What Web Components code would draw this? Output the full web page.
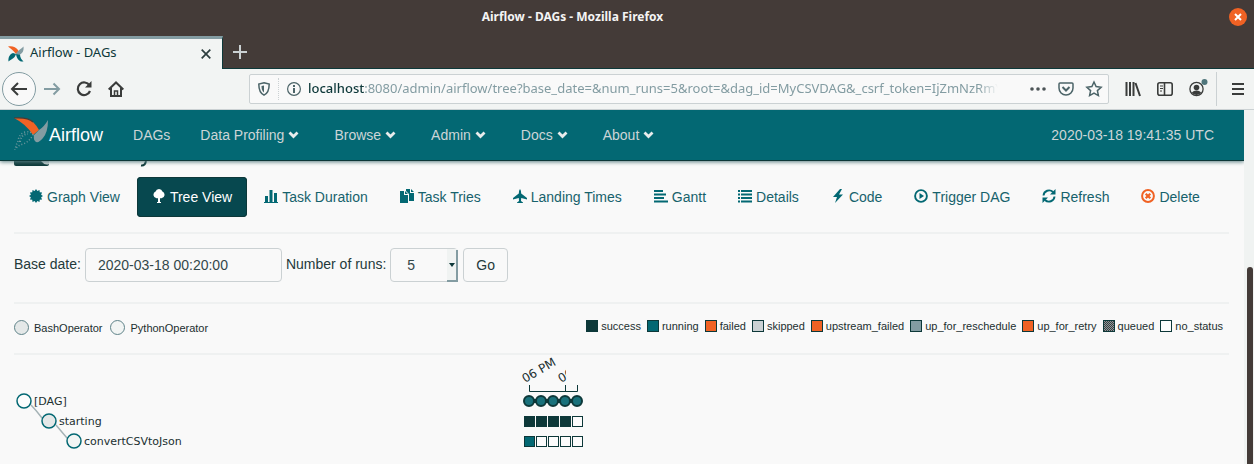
<!DOCTYPE html>
<html lang="en">
<head>
<meta charset="utf-8">
<title>Airflow - DAGs</title>
<style>
  :root {
    --teal: #036873;
    --ink: #0d3839;
    --steel: #839ca2;
    --silver: #cbd1d3;
    --orange: #f06224;
    --chrome: #443b38;
    --bar: #f2f4f3;
    --page: #f9f9f9;
    --ui: "Noto Sans", "Open Sans", sans-serif;
    --web: "Liberation Sans", Arial, sans-serif;
  }
  body { margin: 0; height: 100vh; overflow: hidden; }
</style>
</head>
<body>
<browser-window>
  <title-bar slot="title">Airflow - DAGs - Mozilla Firefox</title-bar>
  <tab-strip slot="tabs">Airflow - DAGs</tab-strip>
  <address-toolbar slot="toolbar"></address-toolbar>
  <site-navbar></site-navbar>
  <dag-page></dag-page>
</browser-window>

<script>
const define = (name, html, setup) => customElements.define(name, class extends HTMLElement {
  connectedCallback() {
    if (this.shadowRoot) return;
    const root = this.attachShadow({ mode: "open" });
    root.innerHTML = typeof html === "function" ? html(this) : html;
    if (setup) setup(this, root);
  }
});

/* ---- window frame ---- */
define("browser-window", `
<style>
  :host { display: flex; flex-direction: column; height: 100%; background: var(--page); }
  .view { flex: 1; min-height: 0; display: flex; border-top: 1px solid var(--silver); }
  .doc { flex: 1; min-width: 0; overflow: hidden; }
  .scroll { width: 10px; background: #f0f3f2; display: flex; flex-direction: column; align-items: flex-end; box-sizing: border-box; padding-right: 1px; }
  .scroll i { flex: 157; }
  .scroll b { flex: 197; width: 6px; background: var(--chrome); border-radius: 3px 3px 0 0; }
</style>
<slot name="title"></slot>
<slot name="tabs"></slot>
<slot name="toolbar"></slot>
<div class="view"><div class="doc"><slot></slot></div><div class="scroll"><i></i><b></b></div></div>`);

define("title-bar", `
<style>
  :host { display: grid; grid-template-columns: 1fr auto; align-items: center; height: 36px; background: var(--chrome); color: #f4f4f4; font: 700 12px/20px var(--ui); }
  .t { text-align: center; padding: 0 0 2px; margin-right: 84px; }
  button { width: 18px; height: 18px; margin: 0 7px 2px 0; padding: 0; border: 0; border-radius: 50%; background: var(--orange); display: grid; place-items: center; }
</style>
<div class="t"><slot></slot></div>
<button aria-label="Close window"><svg width="8" height="8" viewBox="0 0 8 8"><path d="M1 1l6 6M7 1L1 7" stroke="#fff" stroke-width="2"/></svg></button>`);

define("pinwheel-logo", `
<style>:host { display: block; } svg { display: block; width: 100%; height: 100%; }</style>
<svg viewBox="0 0 16 16">
  <path d="M0 .5C4-.5 8 1 10 4l1.500 3L8 8C6 5 3 3 0 .5z" fill="#f06224"/>
  <path d="M15.500.5C16 5 14.500 7 12 8.500L8 8C9 5 12 4 15.500.5z" fill="#839ca2"/>
  <path d="M15.500 15.500C12 16 9 14 8 8l4 .5c0 3 1.500 5 3.500 7z" fill="#036873"/>
  <path d="M.5 15.500C0 11 2 8 5 7l3 1c-1 4-4 5-7.500 7.500z" fill="#036873"/>
</svg>`);

define("tab-strip", `
<style>
  :host { display: flex; height: 33px; background: var(--chrome); font: 13px/20px var(--ui); color: var(--ink); }
  .tab { box-sizing: border-box; width: 223px; display: flex; align-items: center; padding: 0 9px 0 8px; background: var(--bar); border-top: 3px solid var(--steel); border-right: 1px solid var(--ink); }
  pinwheel-logo { width: 16px; height: 16px; margin-right: 6px; }
  .name { flex: 1; padding-bottom: 4px; }
  button { border: 0; padding: 0; background: none; display: grid; place-items: center; }
  .x { width: 14px; height: 14px; }
  .rest { flex: 1; border-bottom: 1px solid var(--ink); display: flex; align-items: center; padding-left: 10px; }
</style>
<div class="tab"><pinwheel-logo></pinwheel-logo><span class="name"><slot></slot></span>
<button class="x" aria-label="Close tab"><svg width="10" height="10" viewBox="0 0 10 10"><path d="M.7.7l8.600 8.600M9.300.7L.7 9.300" stroke="#2c3d3e" stroke-width="1.700"/></svg></button></div>
<div class="rest"><button aria-label="New tab"><svg width="14" height="14" viewBox="0 0 14 14"><path d="M7 0v14M0 7h14" stroke="#cbd1d3" stroke-width="2"/></svg></button></div>`);

define("address-toolbar", `
<style>
  :host { display: flex; align-items: center; height: 40px; background: var(--bar); font: 13px/20px var(--ui); color: var(--steel); }
  button { border: 0; padding: 0; background: none; display: grid; place-items: center; width: 32px; height: 32px; flex: none; }
  svg { display: block; overflow: visible; fill: none; stroke: #3a3c3b; stroke-width: 2; }
  .back { width: 34px; height: 34px; margin: 0 0 0 2px; border: 1px solid var(--steel); border-radius: 50%; background: var(--page); }
  .url { flex: 1; min-width: 0; height: 30px; box-sizing: border-box; margin: 0 8px 0 117px; display: flex; align-items: center; background: var(--page); border: 1px solid var(--silver); border-radius: 2px; }
  .url button { width: 28px; height: 28px; }
  .url svg { stroke: #4c6468; stroke-width: 1.500; }
  .url .info { border-left: 1px dotted var(--silver); height: 22px; width: 30px; }
  .text { flex: 1; min-width: 0; white-space: nowrap; overflow: hidden; margin-right: 14px; padding-bottom: 2px; -webkit-mask-image: linear-gradient(90deg, #000 calc(100% - 32px), transparent calc(100% - 12px)); mask-image: linear-gradient(90deg, #000 calc(100% - 32px), transparent calc(100% - 12px)); outline: 0; }
  .text b { font-weight: 500; color: var(--ink); }
  .menu { border-left: 1px solid var(--silver); width: 38px; height: 34px; padding-left: 4px; margin-left: 3px; }
</style>
<button class="back" aria-label="Back"><svg width="16" height="14" viewBox="0 0 16 14"><path d="M16 7H1M7 1L1 7l6 6"/></svg></button>
<button aria-label="Forward"><svg width="16" height="12" viewBox="0 0 16 12" style="stroke:#839ca2"><path d="M0 6h15M9.500.5L15 6l-5.500 5.500"/></svg></button>
<button aria-label="Reload"><svg width="16" height="16" viewBox="0 0 16 16" style="stroke-width:2.200"><path d="M13.500 4.500A6.300 6.300 0 1 0 14 10"/><path d="M15.500 0v6.500H9z" fill="#3a3c3b" stroke="none"/></svg></button>
<button aria-label="Home"><svg width="16" height="16" viewBox="0 0 16 16"><path d="M.7 8.500L8 1.500l7.300 7M3 7v8h10V7"/><path d="M6.500 15v-5h3v5" stroke-width="1.500"/></svg></button>
<div class="url">
  <button aria-label="Protections"><svg width="12" height="14" viewBox="0 0 12 14"><path d="M6 .8L11.200 2c0 5-.7 9-5.200 11.200C1.500 11 .8 7 .8 2z"/><path d="M6 3.500v7C4 9 3.500 7 3.500 4z" fill="#4c6468" stroke="none"/></svg></button>
  <button class="info" aria-label="Site information"><svg width="14" height="14" viewBox="0 0 14 14" style="stroke-width:1.200"><circle cx="7" cy="7" r="6.400"/><path d="M7 6v5M7 3v2" stroke-width="2"/></svg></button>
  <span class="text" role="textbox" aria-label="Address" tabindex="0"><b>localhost</b>:8080/admin/airflow/tree?base_date=&amp;num_runs=5&amp;root=&amp;dag_id=MyCSVDAG&amp;_csrf_token=IjZmNzRmY</span>
  <button aria-label="Page actions"><svg width="16" height="4" viewBox="0 0 16 4" style="fill:#4c5456;stroke:none"><circle cx="2" cy="2" r="1.800"/><circle cx="8" cy="2" r="1.800"/><circle cx="14" cy="2" r="1.800"/></svg></button>
  <button aria-label="Save to Pocket"><svg width="16" height="14" viewBox="0 0 16 14"><path d="M2 1h12q1 0 1 1v4a7 7 0 0 1-14 0V2q0-1 1-1z"/><path d="M4.500 5L8 8.500 11.500 5" stroke-width="2"/></svg></button>
  <button aria-label="Bookmark"><svg width="16" height="16" viewBox="0 0 16 16"><path d="M8 1l2.100 4.600 5 .6-3.700 3.400 1 5L8 12.200 3.600 14.600l1-5L.9 6.200l5-.6z"/></svg></button>
</div>
<button aria-label="Library"><svg width="16" height="14" viewBox="0 0 16 14"><path d="M1.500 0v14M5 0v14M8.500 0v14M10.500 1l4.500 13"/></svg></button>
<button aria-label="Sidebars"><svg width="16" height="14" viewBox="0 0 16 14" style="stroke-width:1.600"><rect x=".8" y=".8" width="14.400" height="12.400" rx="2"/><path d="M7.500 1v12"/><path d="M3 4h3M3 6.500h3M3 9h2" stroke-width="1.200"/></svg></button>
<button aria-label="Account"><svg width="16" height="16" viewBox="0 0 16 16" style="stroke-width:1.300"><circle cx="7.500" cy="8" r="6.600"/><circle cx="7.500" cy="6.500" r="2.800" fill="#3a3c3b" stroke="none"/><path d="M2.800 12q1-2.500 4.700-2.500t4.700 2.500q-4.700 4-9.400 0z" fill="#3a3c3b" stroke="none"/><circle cx="15.500" cy="1" r="3" fill="#4f757b" stroke="none"/></svg></button>
<button class="menu" aria-label="Menu"><svg width="12" height="12" viewBox="0 0 12 12"><path d="M0 1h12M0 6h12M0 11h12"/></svg></button>`);

/* ---- Airflow site header ---- */
define("nav-item", el => `
<style>
  :host { display: block; }
  a { display: flex; align-items: center; padding: 15px; color: inherit; text-decoration: none; }
  svg { width: 20px; height: 8px; }
</style>
<a href="#"><slot></slot>${el.hasAttribute("menu") ? '<svg viewBox="0 0 20 8"><path d="M5.500 1.500l4 4 4-4" fill="none" stroke="#e8ecec" stroke-width="2.800"/></svg>' : ""}</a>`);

define("site-navbar", `
<style>
  :host { display: block; position: relative; z-index: 1; background: var(--teal); color: #ccd5d7; font: 14px/20px var(--web); border-bottom: 1px solid var(--ink); box-shadow: 0 1px 4px #5c8084; }
  nav { display: flex; align-items: center; padding: 0 15px 0 14px; height: 50px; }
  .brand { display: flex; color: #fff; font-size: 18px; text-decoration: none; margin-right: 15px; align-items: center; }
  .brand svg { width: 34px; height: 34px; margin: -4px 1px 0 0; }
  .clock { margin-left: auto; padding: 0 15px; }
</style>
<nav>
  <a class="brand" href="#"><svg viewBox="0 0 34 34">
    <path d="M0 2q14-1 19 4 4 4 6 8l-6 5Q12 8 0 2z" fill="#f06224"/><path d="M0 2q14-1 19 4" fill="none" stroke="#443b38" stroke-width="1.200"/>
    <path d="M34 4q0 12-5 18-4 5-7 4-3-2-2-7l5-5q5-3 9-10z" fill="#839ca2"/>
    <path d="M19 19q-2-4-8-3-6 2-7 9-2 4-3 9 3-5 8-6 6-2 10-9z" fill="none" stroke="#6e989e" stroke-width="1.500" stroke-dasharray="1 2"/>
    <path d="M6 26q1-8 8-8" fill="none" stroke="#6e989e" stroke-width="2" stroke-dasharray="1 2"/>
  </svg><span>Airflow</span></a>
  <nav-item>DAGs</nav-item><nav-item menu>Data Profiling</nav-item><nav-item menu>Browse</nav-item><nav-item menu>Admin</nav-item><nav-item menu>Docs</nav-item><nav-item menu>About</nav-item>
  <span class="clock">2020-03-18 19:41:35 UTC</span>
</nav>`);

/* ---- view tabs ---- */
const burst = Array.from({ length: 24 }, (_, i) => {
  const r = i % 2 ? 5.3 : 7, a = i * Math.PI / 12;
  return (7 + r * Math.sin(a)).toFixed(2) + "," + (7 - r * Math.cos(a)).toFixed(2);
}).join(" ");
const ICONS = {
  graph: `<polygon points="${burst}"/>`,
  tree: '<path d="M7 0a3.500 3.500 0 0 1 3.400 2.600A3.500 3.500 0 0 1 9.500 9.300H8V13h1v1H5v-1h1V9.300H4.500A3.500 3.500 0 0 1 3.600 2.600 3.500 3.500 0 0 1 7 0z"/>',
  stats: '<path d="M1 7h3v6H1zM5.500 1h3v12h-3zM10 4h3v9h-3zM0 13h14v1H0z"/>',
  copy: '<path d="M0 2h4v4h4v8H0zM5 2l3 3H5zM6 0h4v4h4v8H9V5L6 2zM11 0l3 3h-3z"/>',
  plane: '<path d="M7 0q1.200 1 1.200 4.500L14 9v1.500L8.200 9 8 12l2 1.500V14H4v-.5L6 12 5.800 9 0 10.500V9l5.800-4.500Q5.800 1 7 0z"/>',
  align: '<path d="M0 1h9v2H0zM0 4.500h12v2H0zM0 8h10v2H0zM0 11.500h14v2H0z"/>',
  list: '<path d="M0 1h2v2H0zM3 1h11v2H3zM0 4.500h2v2H0zM3 4.500h11v2H3zM0 8h2v2H0zM3 8h11v2H3zM0 11.500h2v2H0zM3 11.500h11v2H3z"/>',
  flash: '<path d="M9 0L2 8h4l-2 6 8-8.500H8L11 0z"/>',
  play: '<circle cx="7" cy="7" r="5.900" fill="none" stroke="currentColor" stroke-width="1.900"/><path d="M5.500 4l4.500 3-4.500 3z"/>',
  refresh: '<path d="M1.500 6.500A5.600 5.600 0 0 1 11 3M12.500 7.500A5.600 5.600 0 0 1 3 11" fill="none" stroke="currentColor" stroke-width="1.900"/><path d="M13.500 0v5.500H8zM.5 14V8.500H6z"/>',
  remove: '<g style="color:#f06224"><circle cx="7" cy="7" r="5.900" fill="none" stroke="currentColor" stroke-width="2"/><path d="M4.700 4.700l4.600 4.600M9.300 4.700L4.700 9.300" stroke="currentColor" stroke-width="2.200"/></g>'
};
define("view-tab", el => `
<style>
  :host { display: block; }
  a { display: flex; align-items: center; gap: 4px; padding: 10px 15px; border-radius: 4px; color: #17626c; text-decoration: none; white-space: nowrap; }
  svg { width: 14px; height: 14px; fill: currentColor; color: var(--teal); margin-bottom: 2px; }
  :host([active]) a { background: #07484f; color: #fff; box-shadow: inset 0 0 0 1px var(--ink); }
  :host([active]) svg { color: #fff; }
</style>
<a href="#"><svg viewBox="0 0 14 14">${ICONS[el.getAttribute("icon")]}</svg><span><slot></slot></span></a>`);

/* ---- legends ---- */
define("legend-item", el => `
<style>
  :host { display: flex; align-items: center; gap: 3px; }
  i { box-sizing: border-box; width: 12px; height: 12px; border: 1px solid var(--ink); background: ${el.getAttribute("fill")}; }
  :host([round]) { gap: 5px; }
  :host([round]) i { width: 15px; height: 15px; border-radius: 50%; border-color: #5f8389; }
</style><i></i><span><slot></slot></span>`);

define("run-form", `
<style>
  :host { display: block; font: 14px/20px var(--web); color: #24393b; }
  form { display: flex; align-items: center; gap: 4px; }
  input, select, button { box-sizing: border-box; height: 34px; border: 1px solid var(--silver); border-radius: 4px; background: var(--page); font: inherit; color: #33474a; margin: 0; }
  input { width: 197px; padding: 0 12px; }
  .pick { position: relative; margin-right: 1px; }
  select { width: 68px; padding: 0 16px; appearance: none; display: block; }
  svg { position: absolute; right: 0; top: 1px; pointer-events: none; }
  button { padding: 0 12px; color: #24393b; }
  label { padding-bottom: 2px; }
</style>
<form onsubmit="return false">
  <label for="d">Base date:</label><input id="d" value="2020-03-18 00:20:00">
  <label for="n">Number of runs:</label>
  <span class="pick"><select id="n"><option>5</option><option>25</option><option>50</option><option>100</option></select>
  <svg width="12" height="33" viewBox="0 0 12 33"><path d="M1 0h10v31H1z" fill="#f0f3f2"/><path d="M11 1v31H1" fill="none" stroke="#839ca2" stroke-width="2"/><path d="M3 14h6l-3 4z" fill="#0d3839"/></svg></span>
  <button>Go</button>
</form>`);

/* ---- task tree ---- */
define("task-tree", () => {
  const row = (y, fills) => fills.map((f, i) => `<rect x="${510.5 + i * 12}" y="${y}" width="10" height="10" fill="${f}"/>`).join("");
  const D = "#0d3839", T = "#036873", W = "#fcfcfc";
  return `
<style>
  :host { display: block; }
  svg { display: block; width: 100%; height: 110px; font: 11px "DejaVu Sans", sans-serif; fill: #202f30; }
  .time { font-size: 12px; }
</style>
<svg role="img" aria-label="Task tree">
  <defs><clipPath id="c"><path d="M540 0h12v20l2 10h-14z"/></clipPath></defs>
  <path d="M17 50q5 5 11 13M42 70q5 6 11 13" stroke="#a5b3b6" stroke-width="1.500" fill="none"/>
  <g stroke="#036873" stroke-width="1.500"><circle cx="10" cy="46" r="7" fill="#fcfcfc"/><circle cx="35" cy="66" r="7" fill="#e4e8e8"/><circle cx="60" cy="86" r="7" fill="#f2f5f4"/></g>
  <text x="20" y="50">[DAG]</text><text x="45" y="70">starting</text><text x="70" y="90">convertCSVtoJson</text>
  <path d="M515.500 30v6.500h48V30M551.500 30v6" fill="none" stroke="${D}"/>
  <text class="time" transform="translate(511 28) rotate(-30)">06 PM</text>
  <g clip-path="url(#c)"><text class="time" transform="translate(547 28) rotate(-30)">06</text></g>
  <path d="M515 46h48" stroke="${D}" stroke-width="4"/>
  <g fill="#19717b" stroke="${D}" stroke-width="2">${[0,1,2,3,4].map(i => `<circle cx="${515 + i * 12}" cy="46" r="5"/>`).join("")}</g>
  <g stroke="${D}">${row(61.5, [D, D, D, D, W])}${row(81.5, [T, W, W, W, W])}</g>
</svg>`;
});

define("dag-page", `
<style>
  :host { display: block; padding: 0 15px 0 14px; background: var(--page); color: #222f30; font: 14px/20px var(--web); }
  .cut { display: block; height: 6px; }
  .tabs { display: flex; gap: 2px; margin-top: 10px; }
  hr { border: 0; height: 2px; background: #eff1f1; margin: 0; }
  .tabs + hr { margin: 15px 0 14px; }
  run-form + hr { margin: 20px 0 0; }
  .legends { display: flex; justify-content: space-between; align-items: center; font-size: 11px; height: 46px; padding-bottom: 3px; }
  .ops { display: flex; gap: 8px; padding-top: 1px; }
  .states { display: flex; gap: 6px; padding-right: 6px; padding-bottom: 2px; }
</style>
<svg class="cut" width="140" height="6" viewBox="0 0 140 6" aria-hidden="true"><path d="M0 0h35v3q0 2-2 2H2Q0 5 0 3z" fill="#0d3839"/><path d="M27 0h8v3q-4 2-8-3z" fill="#cbd1d3"/><path d="M132 0q-1 5-5 4.500" fill="none" stroke="#0d3839" stroke-width="2"/></svg>
<div class="tabs">
  <view-tab icon="graph">Graph View</view-tab><view-tab icon="tree" active>Tree View</view-tab><view-tab icon="stats">Task Duration</view-tab><view-tab icon="copy">Task Tries</view-tab><view-tab icon="plane">Landing Times</view-tab><view-tab icon="align">Gantt</view-tab><view-tab icon="list">Details</view-tab><view-tab icon="flash">Code</view-tab><view-tab icon="play">Trigger DAG</view-tab><view-tab icon="refresh">Refresh</view-tab><view-tab icon="remove">Delete</view-tab>
</div>
<hr>
<run-form></run-form>
<hr>
<div class="legends">
  <div class="ops"><legend-item round fill="#e4e8e8">BashOperator</legend-item><legend-item round fill="#f2f5f4">PythonOperator</legend-item></div>
  <div class="states">
    <legend-item fill="#0d3839">success</legend-item><legend-item fill="#036873">running</legend-item><legend-item fill="#f06224">failed</legend-item><legend-item fill="#cbd1d3">skipped</legend-item><legend-item fill="#f06224">upstream_failed</legend-item><legend-item fill="#839ca2">up_for_reschedule</legend-item><legend-item fill="#f06224">up_for_retry</legend-item><legend-item fill="repeating-conic-gradient(#443b38 0 25%, #839ca2 0 50%) 0 0 / 2px 2px">queued</legend-item><legend-item fill="#fcfcfc">no_status</legend-item>
  </div>
</div>
<hr>
<task-tree></task-tree>`);
</script>
</body>
</html>
